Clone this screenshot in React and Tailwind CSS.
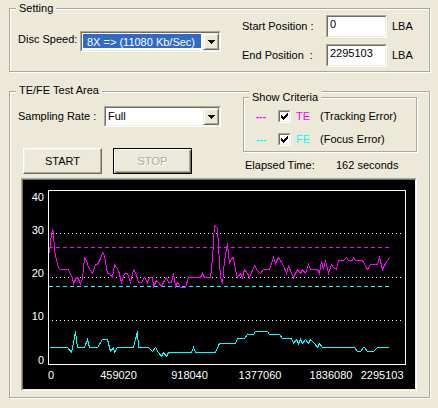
import React from 'react';

const TE = [[49,253],[51,233],[52,230],[53,232],[54,250],[56,260],[58,267],[60,269],[68,269],[72,278],[73,283],[76,277],[77,277],[80,283],[82,278],[84,257],[86,260],[88,267],[92,273],[95,264],[97,264],[100,258],[102,252],[104,255],[107,273],[109,273],[112,277],[114,264],[118,270],[121,282],[124,273],[127,273],[130,282],[133,269],[135,272],[138,282],[141,282],[144,277],[147,282],[149,277],[152,277],[153,286],[156,280],[158,282],[161,286],[163,282],[166,277],[168,282],[171,282],[173,273],[175,286],[177,282],[180,287],[185,287],[188,277],[200,277],[202,273],[204,277],[210,277],[212,258],[214,225],[217,228],[218,247],[220,277],[222,283],[224,260],[227,243],[229,263],[231,258],[233,257],[235,270],[237,277],[240,273],[242,277],[244,269],[247,273],[249,277],[254,265],[257,270],[260,273],[263,269],[269,269],[273,257],[275,263],[278,257],[283,265],[286,273],[288,266],[290,270],[293,277],[297,269],[300,273],[302,269],[305,273],[308,264],[310,269],[317,269],[319,273],[321,261],[323,269],[325,260],[328,273],[331,264],[333,267],[336,269],[338,260],[343,260],[346,257],[348,260],[352,260],[353,257],[355,260],[362,260],[367,269],[370,264],[377,264],[379,257],[382,269],[385,263],[389,257]];

const FE = [[49,347],[67,347],[71,352],[73,342],[75,331],[77,347],[84,347],[87,339],[89,347],[97,347],[102,339],[107,339],[110,351],[113,347],[114,352],[117,347],[133,347],[135,339],[137,331],[138,347],[148,347],[152,351],[155,347],[158,352],[161,356],[163,352],[166,356],[168,352],[191,352],[193,347],[195,352],[215,352],[219,343],[235,343],[237,338],[244,338],[247,334],[253,334],[255,331],[267,331],[269,334],[279,334],[282,338],[291,338],[293,343],[296,339],[298,343],[300,339],[302,343],[305,339],[308,343],[310,339],[314,343],[317,347],[319,343],[322,347],[354,347],[357,351],[360,351],[363,347],[364,347],[367,351],[373,351],[377,347],[388,347]];

const pts = (a) => a.map(([x, y]) => `${x + 0.5},${y + 0.5}`).join(' ');

const CHECK = [
  '......#',
  '.....##',
  '#...###',
  '##.###.',
  '#####..',
  '.###...',
  '..#....',
];

function Sunken({ className, innerClassName, children }) {
  return (
    <div className={`border border-t-[#ACA899] border-l-[#ACA899] border-b-white border-r-white ${className}`}>
      <div className={`h-full w-full border border-t-[#716F64] border-l-[#716F64] border-b-[#F1EFE2] border-r-[#F1EFE2] ${innerClassName}`}>
        {children}
      </div>
    </div>
  );
}

function DropBtn() {
  return (
    <div className="w-[16px] h-full shrink-0 border border-t-[#F1EFE2] border-l-[#F1EFE2] border-b-[#716F64] border-r-[#716F64] bg-[#ECE9D8] shadow-[inset_1px_1px_0_#fff,inset_-1px_-1px_0_#ACA899] flex items-center justify-center">
      <svg width="7" height="4" viewBox="0 0 7 4" shapeRendering="crispEdges" className="block">
        <path d="M0 0H7V1H6V2H5V3H4V4H3V3H2V2H1V1H0Z" fill="#000" />
      </svg>
    </div>
  );
}

function CheckBox() {
  return (
    <Sunken className="w-[13px] h-[13px] shrink-0" innerClassName="bg-white">
      <svg width="9" height="9" viewBox="0 0 9 9" shapeRendering="crispEdges" className="block">
        {CHECK.map((row, r) =>
          row.split('').map((c, i) =>
            c === '#' ? <rect key={`${r}-${i}`} x={i + 1} y={r + 1} width="1" height="1" fill="#000" /> : null
          )
        )}
      </svg>
    </Sunken>
  );
}

export default function App() {
  const font = "'Liberation Sans', Arial, sans-serif";
  return (
    <div className="w-[438px] h-[408px] overflow-hidden bg-[#ECE9D8] font-['Liberation_Sans',Arial,sans-serif] text-[11px] leading-[13px] text-black pt-[8px] pl-[9px] flex flex-col gap-[19px]">
      {/* Setting group */}
      <div className="relative w-[421px] h-[64px] shrink-0 border border-[#ACA899] shadow-[inset_1px_1px_0_#fff,1px_1px_0_#fff] flex items-start">
        <span className="absolute left-[6px] top-[-7px] px-[3px] bg-[#ECE9D8]">Setting</span>
        <div className="mt-[22px] ml-[8px] flex items-start">
          <span className="w-[62px] mt-[2px] whitespace-nowrap">Disc Speed:</span>
          <Sunken className="w-[141px] h-[21px]" innerClassName="bg-white flex">
            <div className="flex-1 mt-[1px] mb-[2px] ml-[1px] mr-[2px] bg-[#316AC5] text-white pl-[4px] pt-[2px] whitespace-nowrap overflow-hidden">
              8X =&gt; (11080 Kb/Sec)
            </div>
            <DropBtn />
          </Sunken>
        </div>
        <div className="mt-[6px] ml-[21px] grid grid-cols-[84px_61px_auto] auto-rows-[23px] gap-y-[6px] items-center">
          <span className="whitespace-nowrap">Start Position :</span>
          <Sunken className="w-[61px] h-[23px]" innerClassName="bg-white pl-[2px] pt-[1px]">0</Sunken>
          <span className="pl-[5px]">LBA</span>
          <span className="whitespace-nowrap">End Position&nbsp; :</span>
          <Sunken className="w-[61px] h-[23px]" innerClassName="bg-white pl-[2px] pt-[1px]">2295103</Sunken>
          <span className="pl-[5px]">LBA</span>
        </div>
      </div>

      {/* TE/FE Test Area group */}
      <div className="relative w-[421px] h-[307px] shrink-0 border border-[#ACA899] shadow-[inset_1px_1px_0_#fff,1px_1px_0_#fff] flex flex-col">
        <span className="absolute left-[6px] top-[-8px] px-[3px] bg-[#ECE9D8]">TE/FE Test Area</span>
        <div className="h-[86px] shrink-0 flex items-start">
          <div className="w-[211px] shrink-0 flex flex-col pt-[14px]">
            <div className="ml-[8px] flex items-center">
              <span className="w-[86px] whitespace-nowrap">Sampling Rate :</span>
              <Sunken className="w-[117px] h-[21px]" innerClassName="bg-white flex">
                <div className="flex-1 pl-[2px] pt-[2px]">Full</div>
                <DropBtn />
              </Sunken>
            </div>
            <div className="mt-[21px] ml-[13px] flex gap-[11px]">
              <button type="button" className="w-[79px] h-[26px] p-0 bg-[#ECE9D8] border border-t-white border-l-white border-b-[#716F64] border-r-[#716F64] shadow-[inset_-1px_-1px_0_#ACA899,inset_1px_1px_0_#F1EFE2] flex items-center justify-center text-black">
                START
              </button>
              <button type="button" className="w-[79px] h-[26px] p-0 bg-[#ECE9D8] border border-black shadow-[inset_1px_1px_0_#fff,inset_-1px_-1px_0_#716F64,inset_-2px_-2px_0_#ACA899] flex items-center justify-center text-[#ACA899] [text-shadow:1px_1px_0_#fff]">
                STOP
              </button>
            </div>
          </div>
          <div className="ml-[22px] pt-[5px] flex flex-col">
            <div className="relative w-[174px] h-[55px] border border-[#ACA899] shadow-[inset_1px_1px_0_#fff,1px_1px_0_#fff]">
              <span className="absolute left-[5px] top-[-7px] px-[3px] bg-[#ECE9D8]">Show Criteria</span>
              <div className="pt-[12px] pl-[12px] flex flex-col gap-[10px]">
                <div className="h-[13px] flex items-center">
                  <span className="w-[22px] text-[10px] font-bold text-[#FF00FF]">---</span>
                  <CheckBox />
                  <span className="ml-[5px] w-[24px] text-[#FF00FF]">TE</span>
                  <span className="whitespace-nowrap">(Tracking Error)</span>
                </div>
                <div className="h-[13px] flex items-center">
                  <span className="w-[22px] text-[10px] font-bold text-[#00FFFF]">---</span>
                  <CheckBox />
                  <span className="ml-[5px] w-[24px] text-[#00FFFF]">FE</span>
                  <span className="whitespace-nowrap">(Focus Error)</span>
                </div>
              </div>
            </div>
            <div className="mt-[7px] ml-[2px] flex whitespace-nowrap">
              <span className="w-[91px]">Elapsed Time:</span>
              <span>162 seconds</span>
            </div>
          </div>
        </div>

        {/* Chart panel */}
        <div className="ml-[11px] w-[396px] h-[213px] shrink-0 border border-t-[#ACA899] border-l-[#ACA899] border-b-white border-r-white">
          <div className="w-full h-full border border-t-[#716F64] border-l-[#716F64] border-b-[#F1EFE2] border-r-[#F1EFE2] bg-black">
            <svg width="392" height="209" viewBox="23 180 392 209" className="block" shapeRendering="crispEdges">
              <rect x="48.5" y="190.5" width="357" height="174" fill="none" stroke="#fff" strokeWidth="1" />
              {[233.5, 277.5, 320.5].map((y) => (
                <line key={y} x1="52" y1={y} x2="402" y2={y} stroke="#fff" strokeWidth="1" strokeDasharray="1 3" />
              ))}
              <line x1="49" y1="247.5" x2="392" y2="247.5" stroke="#FF00FF" strokeWidth="1" strokeDasharray="4 3" />
              <line x1="49" y1="286.5" x2="392" y2="286.5" stroke="#00FFFF" strokeWidth="1" strokeDasharray="4 3" />
              <polyline points={pts(TE)} fill="none" stroke="#FF00FF" strokeWidth="1" />
              <polyline points={pts(FE)} fill="none" stroke="#00FFFF" strokeWidth="1" />
              <g fill="#fff" fontFamily={font} fontSize="11">
                <text x="44" y="200.7" textAnchor="end">40</text>
                <text x="44" y="234.3" textAnchor="end">30</text>
                <text x="44" y="277" textAnchor="end">20</text>
                <text x="44" y="320.3" textAnchor="end">10</text>
                <text x="44" y="364.3" textAnchor="end">0</text>
                <text x="48" y="379" textAnchor="start">0</text>
                <text x="118.5" y="379" textAnchor="middle">459020</text>
                <text x="189.5" y="379" textAnchor="middle">918040</text>
                <text x="260" y="379" textAnchor="middle">1377060</text>
                <text x="331" y="379" textAnchor="middle">1836080</text>
                <text x="403.5" y="379" textAnchor="end">2295103</text>
              </g>
            </svg>
          </div>
        </div>
      </div>
    </div>
  );
}
